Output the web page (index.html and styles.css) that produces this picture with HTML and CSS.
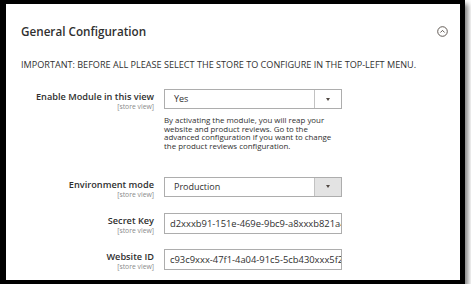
FILE: index.html
```html
<!DOCTYPE html>
<html>
<head>
<meta charset="utf-8">
<link rel="stylesheet" href="styles.css">
</head>
<body>
<div class="frame">
  <div class="section-head">
    <h2 class="section-title">General Configuration</h2>
    <span class="collapse-icon">
      <svg width="11" height="11" viewBox="0 0 11 11"><circle cx="5.5" cy="5.5" r="4.8" fill="none" stroke="#514943" stroke-width="0.9"/><path d="M3.4 6.5 L5.5 4.4 L7.6 6.5" fill="none" stroke="#514943" stroke-width="0.9"/></svg>
    </span>
  </div>
  <p class="notice">IMPORTANT: BEFORE ALL PLEASE SELECT THE STORE TO CONFIGURE IN THE TOP-LEFT MENU.</p>
  <div class="form">
    <div class="row">
      <div class="label"><span class="label-text">Enable Module in this view</span><span class="scope">[store view]</span></div>
      <div class="control">
        <div class="select"><span class="select-value">Yes</span><span class="select-btn"><span class="caret"></span></span></div>
        <p class="note">By activating the module, you will reap your website and product reviews. Go to the advanced configuration if you want to change the product reviews configuration.</p>
      </div>
    </div>
    <div class="row row-env">
      <div class="label"><span class="label-text">Environment mode</span><span class="scope">[store view]</span></div>
      <div class="control">
        <div class="select"><span class="select-value">Production</span><span class="select-btn hover"><span class="caret"></span></span></div>
      </div>
    </div>
    <div class="row row-input">
      <div class="label"><span class="label-text">Secret Key</span><span class="scope">[store view]</span></div>
      <div class="control">
        <div class="input">d2xxxb91-151e-469e-9bc9-a8xxxb821a4f</div>
      </div>
    </div>
    <div class="row row-input">
      <div class="label"><span class="label-text">Website ID</span><span class="scope">[store view]</span></div>
      <div class="control">
        <div class="input">c93c9xxx-47f1-4a04-91c5-5cb430xxx5f2</div>
      </div>
    </div>
  </div>
</div>
</body>
</html>
```
FILE: styles.css
```css
html, body {
  margin: 0;
  padding: 0;
  background: #ffffff;
}
body {
  font-family: "Open Sans", "Liberation Sans", sans-serif;
  color: #303030;
}
.frame {
  box-sizing: border-box;
  width: 465px;
  height: 284px;
  border-style: solid;
  border-color: #000;
  border-width: 4px 5px 4px 6px;
  box-shadow: 3px 4px 5px rgba(0,0,0,0.5);
  background: #fff;
  padding: 20px 0 0 15px;
}
.section-head {
  display: flex;
  align-items: center;
  justify-content: space-between;
  padding-right: 12px;
  height: 15px;
}
.section-title {
  margin: 0;
  font-size: 11.7px;
  font-weight: 600;
  line-height: 15px;
  color: #303030;
}
.collapse-icon {
  display: flex;
  width: 11px;
  height: 11px;
}
.notice {
  margin: 20px 0 0 0;
  font-size: 9.1px;
  line-height: 12px;
  color: #303030;
  white-space: nowrap;
}
.form {
  margin-top: 18px;
  display: flex;
  flex-direction: column;
}
.row {
  display: grid;
  grid-template-columns: 133px 178px;
  column-gap: 10px;
}
.row-env { margin-top: 26px; }
.row-input { margin-top: 14px; }
.label {
  display: flex;
  flex-direction: column;
  align-items: flex-end;
  padding-top: 2px;
}
.label-text {
  font-size: 9.2px;
  font-weight: 600;
  line-height: 12px;
  color: #303030;
  white-space: nowrap;
}
.scope {
  font-size: 6.8px;
  line-height: 8px;
  color: #8a8a8a;
  white-space: nowrap;
}
.select {
  box-sizing: border-box;
  height: 20px;
  border: 1px solid #adadad;
  display: flex;
  background: #fff;
}
.select-value {
  flex: 1;
  font-size: 9px;
  line-height: 18px;
  padding-left: 9px;
  color: #303030;
}
.select-btn {
  width: 26px;
  border-left: 1px solid #c2c2c2;
  display: flex;
  align-items: center;
  justify-content: center;
}
.select-btn.hover { background: #e3e3e3; }
.caret {
  width: 0;
  height: 0;
  border-left: 2.5px solid transparent;
  border-right: 2.5px solid transparent;
  border-top: 3px solid #514943;
}
.note {
  margin: 7px 0 0 0;
  font-size: 7.9px;
  line-height: 8.7px;
  color: #303030;
}
.input {
  box-sizing: border-box;
  height: 21px;
  border: 1px solid #adadad;
  font-size: 9.4px;
  line-height: 19px;
  padding-left: 5px;
  white-space: nowrap;
  overflow: hidden;
  color: #303030;
}
```
